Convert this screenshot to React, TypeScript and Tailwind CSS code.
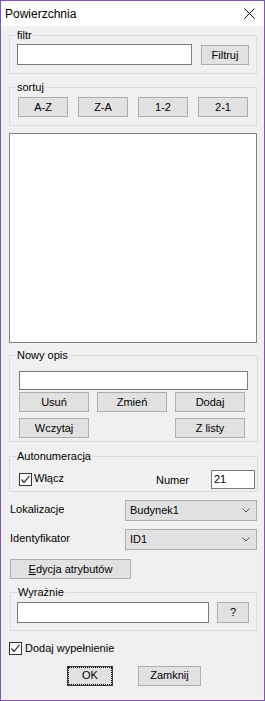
import React from "react";

const font = { fontFamily: '"Liberation Sans", Arial, sans-serif' };

function Btn({ children, className = "" }: { children: React.ReactNode; className?: string }) {
  return (
    <div
      className={
        "h-[20px] flex items-center justify-center bg-[#e1e1e1] border border-[#adadad] text-[11px] text-black leading-none " +
        className
      }
    >
      {children}
    </div>
  );
}

function Group({ label, className = "", children }: { label: string; className?: string; children?: React.ReactNode }) {
  return (
    <div className={"relative border border-[#dcdcdc] " + className}>
      <span className="absolute left-[6px] -top-[7px] bg-[#f0f0f0] px-[1px] text-[11px] leading-[13px] text-black">
        {label}
      </span>
      {children}
    </div>
  );
}

function Check() {
  return (
    <div className="w-[13px] h-[13px] border border-[#333333] bg-white flex items-center justify-center shrink-0">
      <svg width="11" height="11" viewBox="0 0 11 11">
        <path d="M1.5 5.5 L4 8.5 L9.5 1.8" stroke="#333333" strokeWidth="1.2" fill="none" />
      </svg>
    </div>
  );
}

function Combo({ value }: { value: string }) {
  return (
    <div className="w-[132px] h-[21px] bg-[#e1e1e1] border border-[#adadad] flex items-center pl-[4px] pr-[6px] text-[11px]">
      <span className="flex-1">{value}</span>
      <svg width="8" height="5" viewBox="0 0 8 5">
        <path d="M0.5 0.5 L4 4 L7.5 0.5" stroke="#555555" strokeWidth="1" fill="none" />
      </svg>
    </div>
  );
}

export default function App() {
  return (
    <div
      className="w-[265px] h-[701px] border border-[#8252be] bg-[#f0f0f0] flex flex-col text-black text-[11px] overflow-hidden"
      style={font}
    >
      {/* title bar */}
      <div className="h-[25px] bg-white flex items-center pl-[4px] pr-[9px] shrink-0">
        <span className="flex-1 text-[12px]">Powierzchnia</span>
        <svg width="11" height="11" viewBox="0 0 11 11">
          <path d="M0.5 0.5 L10.5 10.5 M10.5 0.5 L0.5 10.5" stroke="#111111" strokeWidth="1" />
        </svg>
      </div>

      {/* filtr */}
      <Group label="filtr" className="ml-[8px] mt-[9px] w-[248px] h-[39px] shrink-0">
        <div className="flex items-start pt-[8px] pl-[7px]">
          <div className="w-[175px] h-[21px] bg-white border border-[#7a7a7a]" />
          <Btn className="ml-[9px] mt-[1px] w-[48px]">Filtruj</Btn>
        </div>
      </Group>

      {/* sortuj */}
      <Group label="sortuj" className="ml-[8px] mt-[13px] w-[248px] h-[39px] shrink-0">
        <div className="flex gap-[10px] pt-[9px] pl-[8px]">
          <Btn className="w-[50px]">A-Z</Btn>
          <Btn className="w-[50px]">Z-A</Btn>
          <Btn className="w-[50px]">1-2</Btn>
          <Btn className="w-[50px]">2-1</Btn>
        </div>
      </Group>

      {/* list */}
      <div className="ml-[8px] mt-[7px] w-[248px] h-[210px] bg-white border border-[#828282] shrink-0" />

      {/* Nowy opis */}
      <Group label="Nowy opis" className="ml-[8px] mt-[12px] w-[249px] h-[87px] shrink-0">
        <div className="flex flex-col pt-[15px] pl-[9px]">
          <div className="w-[229px] h-[19px] bg-white border border-[#7a7a7a]" />
          <div className="flex mt-[2px]">
            <Btn className="w-[70px]">Usuń</Btn>
            <Btn className="w-[70px] ml-[8px]">Zmień</Btn>
            <Btn className="w-[70px] ml-[8px]">Dodaj</Btn>
          </div>
          <div className="flex mt-[6px]">
            <Btn className="w-[70px]">Wczytaj</Btn>
            <Btn className="w-[70px] ml-[86px]">Z listy</Btn>
          </div>
        </div>
      </Group>

      {/* Autonumeracja */}
      <Group label="Autonumeracja" className="ml-[8px] mt-[14px] w-[249px] h-[36px] shrink-0">
        <div className="flex items-center pt-[13px] pl-[9px]">
          <Check />
          <span className="ml-[2px] -mt-[3px]">Włącz</span>
          <span className="ml-[92px] mt-[2px]">Numer</span>
          <div className="ml-[22px] w-[44px] h-[19px] bg-white border border-[#7a7a7a] flex items-center pl-[2px]">
            21
          </div>
        </div>
      </Group>

      {/* Lokalizacje */}
      <div className="flex items-center mt-[8px] pl-[9px] shrink-0">
        <span className="w-[115px] -mt-[3px]">Lokalizacje</span>
        <Combo value="Budynek1" />
      </div>
      <div className="flex items-center mt-[8px] pl-[9px] shrink-0">
        <span className="w-[115px] -mt-[3px]">Identyfikator</span>
        <Combo value="ID1" />
      </div>

      <Btn className="ml-[9px] mt-[9px] w-[121px] shrink-0">
        <span className="underline underline-offset-[1px]">E</span>dycja atrybutów
      </Btn>

      {/* Wyrażnie */}
      <Group label="Wyrażnie" className="ml-[9px] mt-[13px] w-[247px] h-[39px] shrink-0">
        <div className="flex items-start pt-[9px] pl-[6px]">
          <div className="w-[192px] h-[21px] bg-white border border-[#7a7a7a]" />
          <Btn className="ml-[8px] w-[32px] h-[21px]">?</Btn>
        </div>
      </Group>

      <div className="flex items-center mt-[9px] pl-[8px] shrink-0">
        <Check />
        <span className="ml-[3px]">Dodaj wypełnienie</span>
      </div>

      <div className="flex mt-[9px] pl-[66px] shrink-0">
        <div className="w-[46px] h-[20px] bg-[#e1e1e1] border border-[#3c3c3c] flex items-center justify-center outline-1 outline-dotted outline-black -outline-offset-[2px]">
          OK
        </div>
        <Btn className="ml-[25px] w-[63px]">Zamknij</Btn>
      </div>
    </div>
  );
}
